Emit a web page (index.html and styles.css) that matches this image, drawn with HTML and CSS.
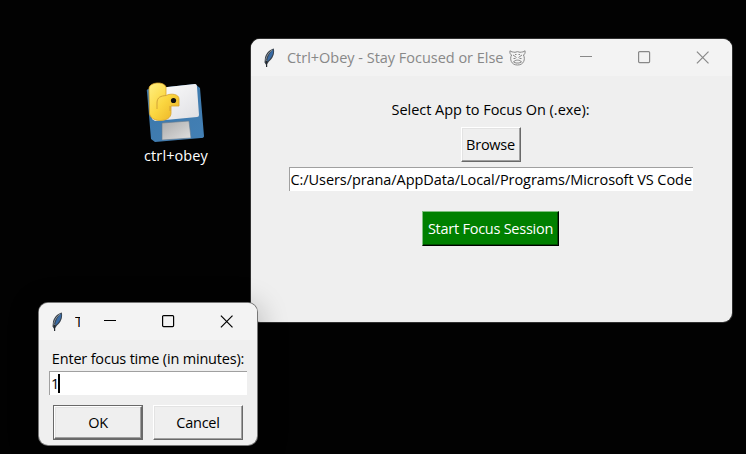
FILE: index.html
```html
<!DOCTYPE html>
<html lang="en">
<head>
<meta charset="utf-8">
<title>Ctrl+Obey</title>
<link rel="stylesheet" href="styles.css">
</head>
<body>
<svg width="0" height="0" class="defs">
  <symbol id="feather" viewBox="0 0 14 20">
    <path d="M10.800.600C7 1.500 3.300 5 2 9.500L1.500 14.500 3.300 17.200 6 13.500C9.800 10.500 12 6 10.800.6Z" fill="#37404a"/>
    <path d="M10.200 1.500C7 4 4.600 8 4 13.500 8 11 10.900 6 10.200 1.500Z" fill="#396ba5"/>
    <path d="M9.300 2C6 4 3.600 7.500 2.800 11.500L3.400 13.500" fill="none" stroke="#8b9298" stroke-width="1"/>
    <path d="M3.600 13V19" stroke="#24292f" stroke-width="1.200"/>
  </symbol>
  <symbol id="min" viewBox="0 0 13 13"><path d="M0 5.500H12"/></symbol>
  <symbol id="max" viewBox="0 0 13 13"><rect x=".6" y=".6" width="11" height="11" rx="1"/></symbol>
  <symbol id="close" viewBox="0 0 13 13"><path d="M.9.700 12.500 12.300M12.500.7.900 12.300"/></symbol>
</svg>
<main class="desktop">
  <div class="shortcut">
    <svg class="app-icon" width="60" height="62" viewBox="0 0 60 62">
      <defs>
        <linearGradient id="y" x1="0" y1="0" x2="1" y2="1"><stop offset="0" stop-color="#fff083"/><stop offset=".5" stop-color="#fbd640"/><stop offset="1" stop-color="#e9ae22"/></linearGradient>
        <linearGradient id="b" x1="0" y1="0" x2="1" y2="1"><stop offset="0" stop-color="#3b76a9"/><stop offset="1" stop-color="#4380b5"/></linearGradient>
        <linearGradient id="w" x1="0" y1="0" x2="1" y2="1"><stop offset="0" stop-color="#fff"/><stop offset="1" stop-color="#dedee2"/></linearGradient>
        <linearGradient id="g" x1="0" y1="0" x2="1" y2="1"><stop offset="0" stop-color="#aaa"/><stop offset="1" stop-color="#e0e0e0"/></linearGradient>
      </defs>
      <path d="M1 9Q0 6 3 6L49 1 54 5 58 53Q58 55 55 55L9 59 5 56Z" fill="url(#b)"/>
      <path d="M3 6 49 1Q51 1 51 4L53 32Q53 34 51 34L9 38 6 36Z" fill="url(#w)"/>
      <path d="M16 40 43 38 45 55 16 57Z" fill="url(#g)" stroke="#63798d" stroke-width=".6"/>
      <path d="M3 5C4-1 18-2 20 4V12.500C25 10 33 11 33 16V23H25V30C25 35 20 37.500 14 37.500 8 37.500 3.500 34 3.500 30Z" fill="url(#y)" stroke="#d9a52c" stroke-width=".8"/>
      <path d="M11 26V20C11 14 15 13 20 12.500M24 23V28" fill="none" stroke="#d2a339"/>
      <circle cx="27.500" cy="17.500" r="2.600" fill="#111"/>
    </svg>
    <span class="text shortcut-name">ctrl+obey</span>
  </div>

  <section class="window main-window">
    <header class="titlebar">
      <svg class="feather" width="14" height="20"><use href="#feather"/></svg>
      <span class="text title">Ctrl+Obey - Stay Focused or Else</span>
      <svg class="devil" width="17" height="16" viewBox="0 0 17 16" fill="none" stroke="#888" stroke-width="1">
        <path d="M3 5.500C1 4.500.6 2.500 1 .7 2 2 4 2 6 2.300M14 5.500C16 4.500 16.400 2.500 16 .7 15 2 13 2 11 2.300M6 2.300Q8.500 1 11 2.300"/>
        <path d="M2.500 5C.5 9 2 15 8.500 15S16.500 9 14.500 5"/>
        <path d="M4 5 7.500 7.500M13 5 9.500 7.500M4.500 12C6 9.500 11 9.500 12.500 12M4.500 8.500H6.500M10.500 8.500H12.500M6 4.500H7.500M9.500 4.500H11M4.500 12 7 13H10L12.500 12"/>
      </svg>
      <div class="controls">
        <svg width="13" height="13"><use href="#min"/></svg>
        <svg width="13" height="13"><use href="#max"/></svg>
        <svg width="13" height="13"><use href="#close"/></svg>
      </div>
    </header>
    <div class="content">
      <label class="text select-label">Select App to Focus On (.exe):</label>
      <button class="button browse"><span class="text">Browse</span></button>
      <div class="entry path"><span class="text">C:/Users/prana/AppData/Local/Programs/Microsoft VS Code</span></div>
      <button class="button start"><span class="text">Start Focus Session</span></button>
    </div>
  </section>

  <section class="window dialog">
    <header class="titlebar">
      <svg class="feather" width="14" height="20"><use href="#feather"/></svg>
      <span class="clipped-title"><span class="text">T</span></span>
      <div class="controls">
        <svg width="13" height="13"><use href="#min"/></svg>
        <svg width="13" height="13"><use href="#max"/></svg>
        <svg width="13" height="13"><use href="#close"/></svg>
      </div>
    </header>
    <div class="content">
      <label class="text time-label">Enter focus time (in minutes):</label>
      <div class="entry minutes"><span class="text">1</span><i class="caret"></i></div>
      <div class="actions">
        <div class="default-ring"><button class="button"><span class="text ok">OK</span></button></div>
        <button class="button cancel"><span class="text">Cancel</span></button>
      </div>
    </div>
  </section>
</main>
</body>
</html>
```
FILE: styles.css
```css
* { box-sizing: border-box; }
body {
  margin: 0;
  background: #020202;
  font: 14.500px/20px "Open Sans", "Noto Sans", sans-serif;
  color: #000;
}
.defs { position: absolute; }
.desktop { position: relative; width: 746px; height: 454px; overflow: hidden; }
.text { white-space: pre; letter-spacing: -0.25px; }

.shortcut {
  position: absolute; left: 130px; top: 83px; width: 92px;
  display: flex; flex-direction: column; align-items: center;
  color: #fff;
}
.app-icon { overflow: visible; }
.shortcut-name { margin-top: 1px; letter-spacing: 0.1px; }

.window {
  position: absolute;
  background: #efefef;
  border-radius: 9px;
  overflow: hidden;
}
.titlebar { height: 37px; display: flex; align-items: center; background: #f3f3f3; }
.controls { display: flex; margin-left: auto; gap: 45px; fill: none; stroke: currentColor; stroke-width: 1.200; }
.content { display: flex; flex-direction: column; align-items: center; }

.main-window {
  left: 251px; top: 39px; width: 481px; height: 283px;
  box-shadow: 0 0 0 1px #303030;
}
.main-window .titlebar { color: #888; padding: 0 23px 0 12px; }
.main-window .title { margin-left: 10px; letter-spacing: -0.02px; }
.devil { margin-left: 6px; }
.main-window .content { padding: 24px 2px 0 0; }
.select-label { letter-spacing: -0.03px; }

.button {
  display: flex; align-items: center; justify-content: center;
  padding: 0; font: inherit; color: #000; height: 35px;
  background: #efefef;
  border: 1px solid; border-color: #fff #696969 #696969 #fff;
  box-shadow: inset -1px -1px #a0a0a0, inset 1px 1px #e3e3e3;
}
.browse { width: 60px; margin-top: 7px; }
.entry {
  display: flex; align-items: center; height: 24px;
  background: #fff; overflow: hidden;
  border-top: 1px solid #a0a0a0; border-left: 1px solid #a0a0a0;
}
.path { width: 404px; margin-top: 5px; padding-left: 1px; }
.path .text { letter-spacing: -0.07px; }
.start {
  width: 137px; margin-top: 20px;
  background: #008000; color: #fff;
  border-color: #7fbf7f #000 #000 #7fbf7f;
  box-shadow: inset -1px -1px #004d00;
}

.dialog {
  left: 39px; top: 303px; width: 218px; height: 142px;
  box-shadow: 0 0 0 1px #777, 0 5px 28px 4px rgba(0, 0, 0, .22);
}
.dialog .titlebar { padding: 0 24px 0 12px; }
.clipped-title { width: 5px; margin-left: 10px; height: 20px; overflow: hidden; }
.dialog .content { padding-top: 9px; }
.time-label { letter-spacing: -0.19px; }
.minutes { width: 198px; margin-top: 2px; padding-left: 1px; }
.minutes .text { letter-spacing: -1px; }
.caret { width: 2px; height: 19px; background: #000; }
.actions { display: flex; gap: 10px; margin-top: 10px; }
.default-ring { width: 90px; height: 35px; border: 1px solid #696969; }
.default-ring .button { width: 100%; height: 100%; }
.cancel { width: 90px; }
```
